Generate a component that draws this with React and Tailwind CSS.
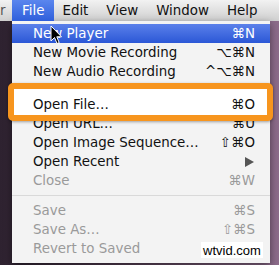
import React from 'react';

const FONT = { fontFamily: '"DejaVu Sans", "Noto Sans", sans-serif' };

const SECTIONS = [
  [
    { label: 'New Player', key: '⌘N', active: true },
    { label: 'New Movie Recording', key: '⌥⌘N' },
    { label: 'New Audio Recording', key: '^⌥⌘N' },
  ],
  [
    { label: 'Open File…', key: '⌘O', marked: true },
    { label: 'Open URL…', key: '⌘U' },
    { label: 'Open Image Sequence…', key: '⇧⌘O' },
    { label: 'Open Recent', arrow: true },
    { label: 'Close', key: '⌘W', disabled: true },
  ],
  [
    { label: 'Save', key: '⌘S', disabled: true },
    { label: 'Save As…', key: '⇧⌘S', disabled: true },
    { label: 'Revert to Saved', disabled: true },
  ],
];

const MenuRow = ({ item }) => (
  <div
    className={`relative flex h-[19px] items-center justify-between pl-[21px] pr-[15px] ${
      item.marked ? 'z-10' : ''
    } ${
      item.active
        ? 'bg-gradient-to-b from-[#5b80ea] to-[#2b57d6] text-white'
        : item.disabled
          ? 'text-[#9a9a9a]'
          : 'text-[#111]'
    }`}
  >
    {/* orange annotation frame drawn over the menu */}
    {item.marked && (
      <div className="absolute -left-[4px] -right-[3px] -top-[12px] -bottom-[7px] rounded-[5px] border-[6px] border-[#f7951e] bg-white shadow-[0_1px_3px_rgba(0,0,0,0.35)]" />
    )}
    <span className="relative">{item.label}</span>
    {item.arrow ? (
      <svg width="9" height="10" viewBox="0 0 9 10" className="mr-[1px]">
        <path d="M0 0 L9 5 L0 10 Z" fill="#555" />
      </svg>
    ) : (
      <span className="relative">{item.key}</span>
    )}
  </div>
);

export default function App() {
  return (
    <div
      className="relative h-[265px] w-[279px] overflow-hidden bg-gradient-to-r from-[#2e2230] via-[#5a4258] to-[#8d6c8b] text-[13.4px] leading-none"
      style={FONT}
    >
      {/* menu bar */}
      <div className="flex h-[21px] items-stretch bg-gradient-to-b from-[#f2f2f2] to-[#cfcfcf] text-[#111]">
        <span className="flex w-[12px] items-center text-[#555]">r</span>
        <span className="flex items-center bg-gradient-to-b from-[#5b86ee] to-[#2f5fdb] px-[10px] text-white">File</span>
        <span className="flex items-center pl-[8px]">Edit</span>
        <span className="flex items-center pl-[18px]">View</span>
        <span className="flex items-center pl-[18px]">Window</span>
        <span className="flex items-center pl-[18px]">Help</span>
      </div>

      {/* dropdown */}
      <div className="ml-[12px] w-[258px] bg-[#f3f3f3] pb-[5px] pt-[3px] shadow-[0_3px_8px_rgba(0,0,0,0.45)]">
        {SECTIONS.map((section, i) => (
          <div key={i}>
            {i > 0 && (
              <div className={`flex items-center ${i === 1 ? 'h-[14px]' : 'h-[11px]'}`}>
                <div className="h-px w-full bg-[#d9d9d9]" />
              </div>
            )}
            {section.map((item) => (
              <MenuRow key={item.label} item={item} />
            ))}
          </div>
        ))}
      </div>

      {/* cursor */}
      <svg className="absolute left-[50px] top-[25px] z-20" width="13" height="20" viewBox="0 0 13 20">
        <path d="M1 1 L1 16 L4.5 12.5 L7 18.5 L9.2 17.6 L6.8 11.8 L11.5 11.8 Z" fill="#000" stroke="#fff" strokeWidth="1" strokeLinejoin="round" />
      </svg>

      {/* watermark */}
      <div
        className="absolute left-[201px] top-[242px] z-20 flex h-[16px] w-[62px] items-center justify-center bg-white text-[13px] text-black"
        style={{ fontFamily: '"Liberation Sans", Arial, sans-serif' }}
      >
        wtvid.com
      </div>
    </div>
  );
}
